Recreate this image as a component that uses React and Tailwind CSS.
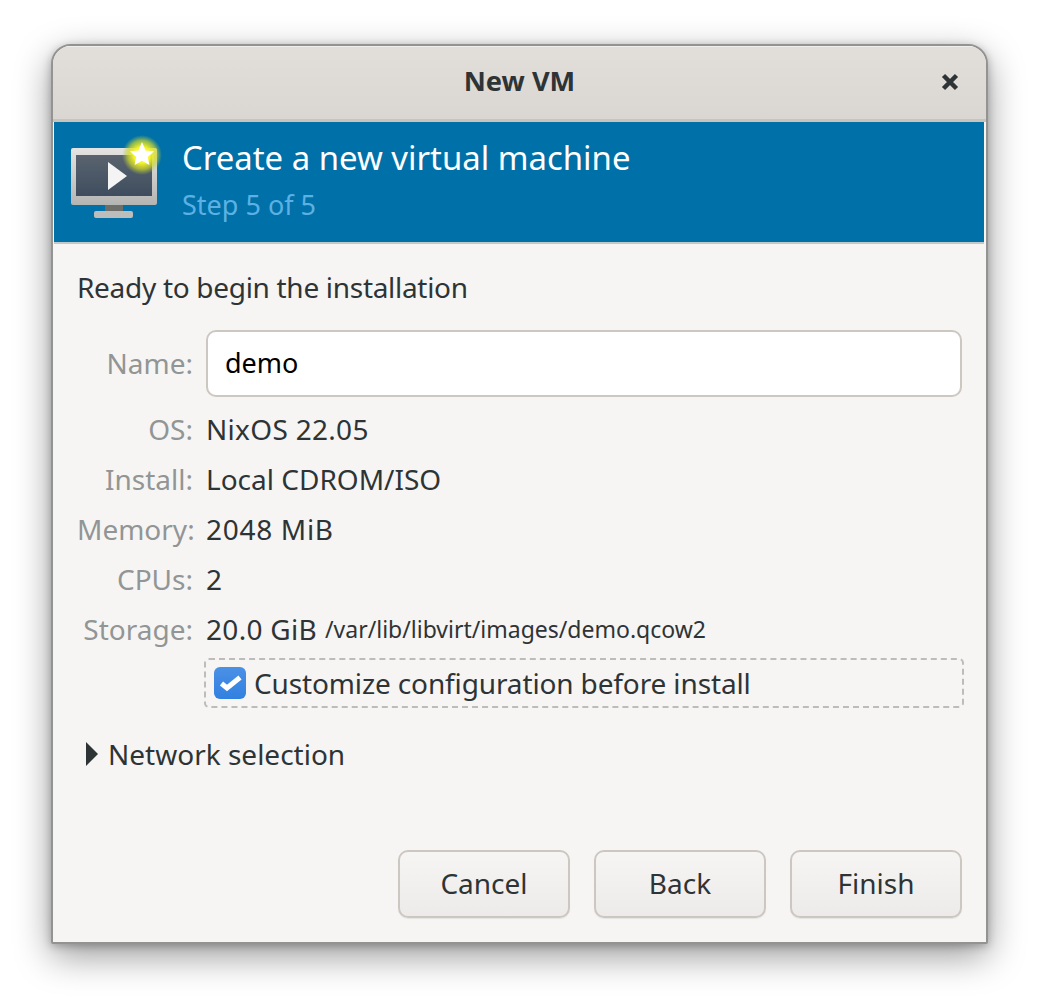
const labelFont = { fontFamily: '"Noto Sans", sans-serif' }

function VmIcon() {
    return (
        <svg width="92" height="84" viewBox="0 0 92 84" className="shrink-0 -mt-[2px] overflow-visible">
            <defs>
                <radialGradient id="glow">
                    <stop offset="0.4" stopColor="#f6f62a" stopOpacity="1" />
                    <stop offset="0.72" stopColor="#d0d828" stopOpacity="0.7" />
                    <stop offset="1" stopColor="#a8c840" stopOpacity="0" />
                </radialGradient>
                <linearGradient id="bezel" x1="0" y1="0" x2="0" y2="1">
                    <stop offset="0" stopColor="#e4e4e2" />
                    <stop offset="1" stopColor="#b4b4b2" />
                </linearGradient>
                <linearGradient id="screen" x1="0" y1="0" x2="0" y2="1">
                    <stop offset="0" stopColor="#59636f" />
                    <stop offset="1" stopColor="#3f4d5e" />
                </linearGradient>
                <filter id="soft">
                    <feGaussianBlur stdDeviation="0.5" />
                </filter>
            </defs>
            <g filter="url(#soft)">
                {/* monitor */}
                <rect x="1" y="9" width="86" height="57" rx="2" fill="url(#bezel)" />
                <rect x="6" y="16" width="76" height="41" fill="url(#screen)" />
                <rect x="35" y="66" width="18" height="6" fill="#6d6d6b" />
                <rect x="24" y="72" width="39" height="7" rx="2" fill="#bdbdbb" />
                <path d="M38 23 L57 37 L38 51 Z" fill="#f4f4f4" />
                {/* star */}
                <circle cx="72" cy="16" r="20" fill="url(#glow)" />
                <path d="M72 3 L75.6 11.4 L84 12.2 L77.8 18 L79.4 26 L72 21.8 L64.6 26 L66.2 18 L60 12.2 L68.4 11.4 Z" fill="#ffffff" />
            </g>
        </svg>
    )
}

function Row({ label, children }) {
    return (
        <div className="flex items-center gap-[13px] h-[32px] pb-[2px]">
            <span className="w-[116px] text-right text-[#929595] whitespace-nowrap">{label}</span>
            {children}
        </div>
    )
}

function DialogButton({ children }) {
    return (
        <button className="w-[172px] h-[68px] pb-[2px] rounded-[10px] border-2 border-[#cdc7c2] bg-gradient-to-b from-[#f6f5f4] to-[#edebe9] text-[#2e3436] shadow-[0_1px_1px_rgba(0,0,0,0.07)]">
            {children}
        </button>
    )
}

export default function App() {
    return (
        <div className="w-[1038px] h-[1000px] bg-white overflow-hidden pl-[51px] pt-[44px]" style={labelFont}>
            <div className="w-[937px] h-[900px] flex flex-col rounded-t-[20px] rounded-b-[2px] border-2 border-[#939391] bg-[#f6f5f4] shadow-[0_12px_36px_rgba(0,0,0,0.4),0_2px_8px_rgba(0,0,0,0.25)] text-[28px] text-[#2e3436] overflow-hidden">
                {/* Titlebar */}
                <div className="h-[76px] shrink-0 pb-[2px] flex items-center justify-center relative bg-gradient-to-b from-[#e2dfdb] to-[#dad6d1] border-b-[3px] border-[#c9c3bc] shadow-[inset_0_1px_0_#f0eeec]">
                    <span className="text-[27.2px] font-bold text-[#2e3436]">New VM</span>
                    <svg width="18" height="18" viewBox="0 0 18 18" className="absolute right-[27px] top-[27px]">
                        <path d="M2.5 2.5 L15.5 15.5 M15.5 2.5 L2.5 15.5" stroke="#2e3436" strokeWidth="4.5" />
                    </svg>
                </div>

                {/* Banner */}
                <div className="h-[122px] shrink-0 ml-px mr-[2px] flex items-center gap-[20px] pl-[16px] bg-[#0070a8] border-b-2 border-[#c4c8c9]">
                    <VmIcon />
                    <div className="flex flex-col -mt-[2px]">
                        <span className="text-[32.9px] leading-[47px] text-white">Create a new virtual machine</span>
                        <span className="text-[27px] leading-[47px] text-[#5cb0e4]">Step 5 of 5</span>
                    </div>
                </div>

                {/* Body */}
                <div className="flex-1 flex flex-col pl-[24px] pr-[24px] pt-[24px]">
                    <div className="h-[40px] pb-[2px] flex items-center whitespace-nowrap tracking-[-0.3px]">Ready to begin the installation</div>

                    <div className="flex flex-col gap-[18px] mt-[22px]">
                        <div className="flex items-center gap-[13px] h-[67px] -mb-[1px]">
                            <span className="w-[116px] text-right text-[#929595] pb-[2px]">Name:</span>
                            <div className="flex-1 h-[67px] rounded-[10px] border-2 border-[#cdc7c2] bg-white flex items-center pl-[17px] text-[27px] text-black">demo</div>
                        </div>
                        <Row label="OS:"><span className="tracking-[0.3px]">NixOS 22.05</span></Row>
                        <Row label="Install:">Local CDROM/ISO</Row>
                        <Row label="Memory:"><span className="tracking-[0.7px]">2048 MiB</span></Row>
                        <Row label="CPUs:">2</Row>
                        <Row label="Storage:">
                            <span className="tracking-[0.3px]">20.0 GiB</span>
                            <span className="text-[23px] -ml-[5px]">/var/lib/libvirt/images/demo.qcow2</span>
                        </Row>
                    </div>

                    <div className="ml-[127px] mt-[12px] -mr-[2px] h-[50px] rounded-[5px] border-2 border-dashed border-[#bdbcba] flex items-center gap-[8px] pl-[8px]">
                        <span className="w-[32px] h-[32px] rounded-[6px] bg-gradient-to-b from-[#4a90e6] to-[#3180e0]">
                            <svg width="32" height="32" viewBox="0 0 32 32">
                                <path d="M7.5 16.5 L13 21 L26 10.5" fill="none" stroke="white" strokeWidth="5" />
                            </svg>
                        </span>
                        <span className="tracking-[-0.13px]">Customize configuration before install</span>
                    </div>

                    <div className="mt-[26px] ml-[9px] h-[40px] flex items-center gap-[10px]">
                        <svg width="12" height="24" viewBox="0 0 12 24">
                            <path d="M0 0 L12 12 L0 24 Z" fill="#2e3436" />
                        </svg>
                        <span>Network selection</span>
                    </div>

                    <div className="mt-auto mb-[24px] flex justify-end gap-[24px]">
                        <DialogButton>Cancel</DialogButton>
                        <DialogButton>Back</DialogButton>
                        <DialogButton>Finish</DialogButton>
                    </div>
                </div>
            </div>
        </div>
    )
}
